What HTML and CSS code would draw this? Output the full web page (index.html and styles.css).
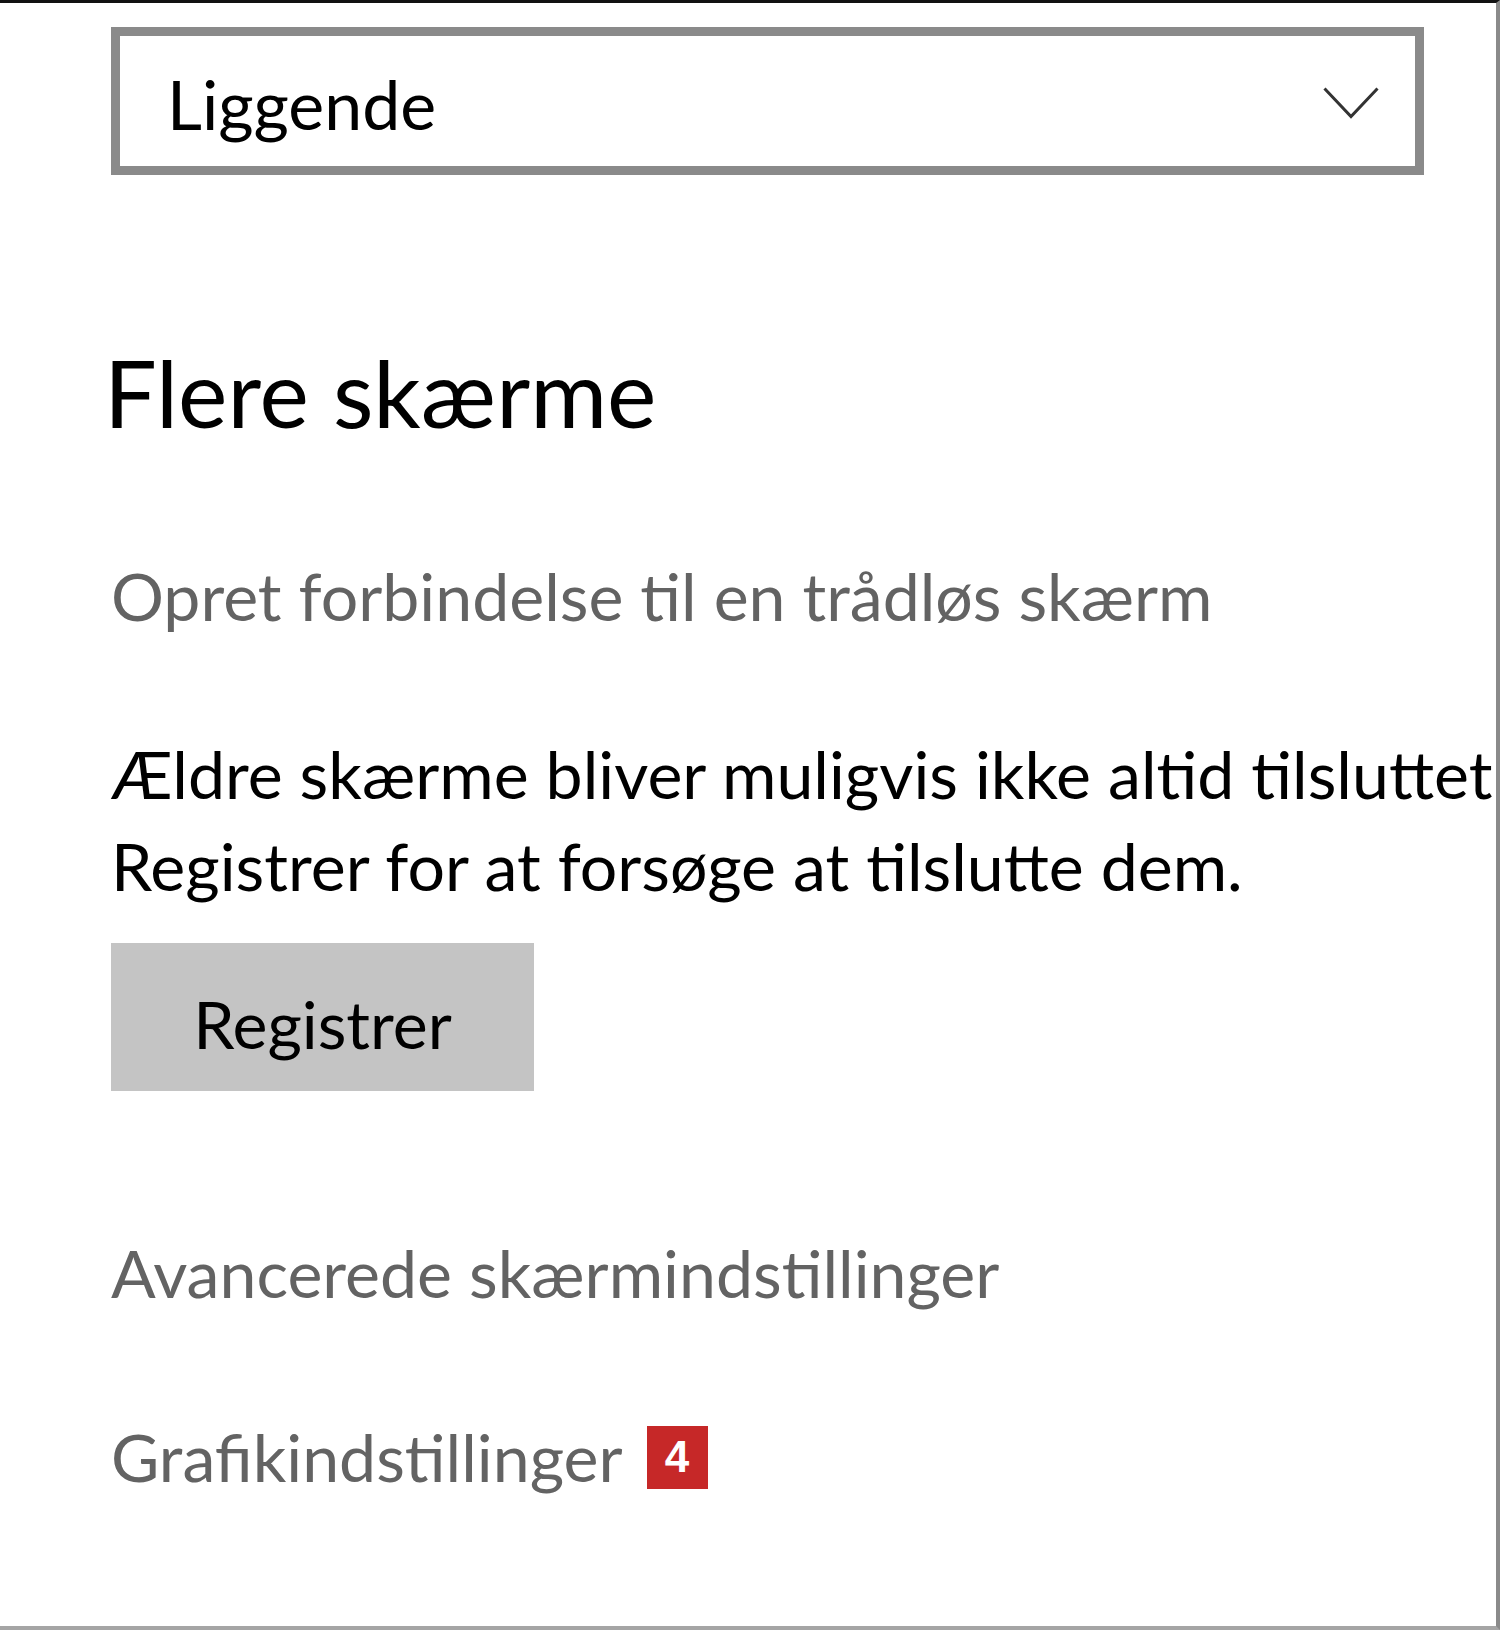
FILE: index.html
```html
<!DOCTYPE html>
<html lang="da">
<head>
  <meta charset="UTF-8">
  <meta name="viewport" content="width=device-width, initial-scale=1">
  <title>Skærm</title>
  <link rel="stylesheet" href="styles.css">
</head>
<body>

  <div class="window">
    <div class="dropdown">
      <span class="dropdown-value">Liggende</span>
      <svg class="chevron" width="56" height="32" viewBox="0 0 56 32">
        <polyline points="1.5,1.5 28,29.5 54.5,1.5" fill="none" stroke="#333" stroke-width="3"/>
      </svg>
    </div>

    <h2 class="section-title">Flere skærme</h2>

    <a class="link" href="#">Opret forbindelse til en trådløs skærm</a>

    <p class="note">Ældre skærme bliver muligvis ikke altid tilsluttet<br>Registrer for at forsøge at tilslutte dem.</p>

    <button class="detect">Registrer</button>

    <a class="link advanced" href="#">Avancerede skærmindstillinger</a>

    <div class="link-row">
      <a class="link" href="#">Grafikindstillinger</a>
      <span class="badge">4</span>
    </div>
  </div>

</body>
</html>
```

FILE: styles.css
```css
body {
  margin: 0;
  background: #fff;
}

.window {
  width: 1500px;
  height: 1630px;
  box-sizing: border-box;
  border-top: 3px solid #111;
  border-right: 4px solid #8a8a8a;
  border-bottom: 4px solid #a5a5a5;
  padding-left: 111px;
  overflow: hidden;
  font-family: 'Lato', 'Open Sans', sans-serif;
  font-size: 66.2px;
  line-height: 92px;
  color: #000;
}

.dropdown {
  width: 1313px;
  height: 148px;
  box-sizing: border-box;
  margin-top: 24px;
  border: 9px solid #8a8a8a;
  padding: 6px 36px 0 47px;
  font-size: 68px;
  display: flex;
  align-items: center;
  justify-content: space-between;
}

.chevron {
  margin-top: -2px;
}

.section-title {
  margin: 157px 0 0 -7px;
  font-size: 93.5px;
  line-height: 120px;
  font-weight: normal;
}

.link {
  display: block;
  color: #636363;
  text-decoration: none;
  white-space: nowrap;
}

.section-title + .link {
  margin-top: 98px;
}

.note {
  margin: 86px 0 0;
  white-space: nowrap;
}

.detect {
  margin-top: 31px;
  width: 423px;
  height: 148px;
  box-sizing: border-box;
  padding: 14px 0 0;
  border: none;
  background: #c4c4c4;
  color: #000;
  font: inherit;
  display: flex;
  align-items: center;
  justify-content: center;
}

.advanced {
  margin-top: 136px;
}

.link-row {
  margin-top: 92px;
  display: flex;
  align-items: center;
  gap: 24px;
}

.badge {
  width: 61px;
  height: 63px;
  background: #c62828;
  color: #fff;
  font-family: 'Liberation Sans', sans-serif;
  font-weight: bold;
  font-size: 44px;
  line-height: 1;
  display: flex;
  align-items: center;
  justify-content: center;
}
```
